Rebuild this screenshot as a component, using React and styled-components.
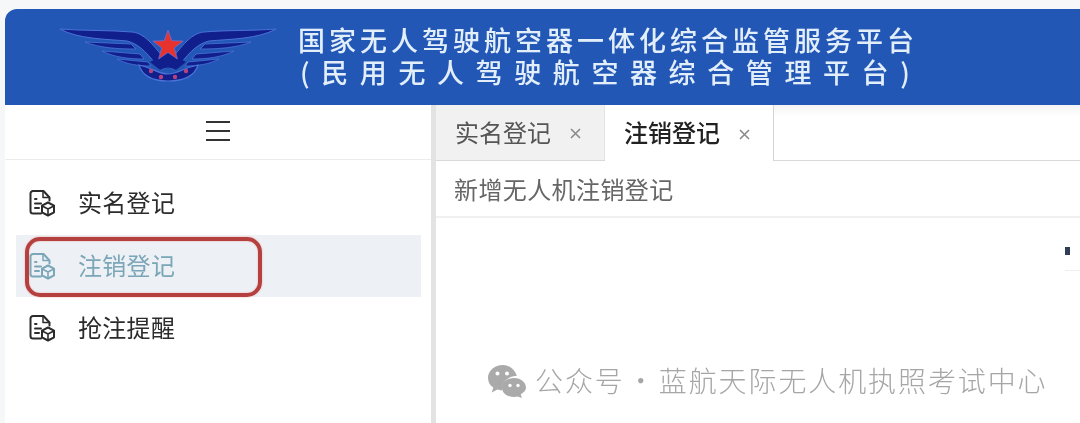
import React from 'react'
import styled, { createGlobalStyle } from 'styled-components'

const Global = createGlobalStyle`
    html, body {
        margin: 0;
        padding: 0;
        height: 100%;
        overflow: hidden;
        background: #ffffff;
    }
    #root {
        height: 100%;
    }
`

const Page = styled.div`
    position: relative;
    width: 1080px;
    height: 423px;
    padding: 9px 0 0 5px;
    box-sizing: border-box;
    display: flex;
    flex-direction: column;
    overflow: hidden;
    background: #f6f7f8;
    font-family: "Noto Sans CJK SC", "Noto Sans", sans-serif;
    filter: blur(0.45px);
`

const Header = styled.header`
    flex: 0 0 96px;
    display: flex;
    align-items: center;
    padding-left: 54px;
    gap: 21px;
    background: #2257b6;
    border-radius: 12px 0 0 0;
`

const Logo = styled.svg`
    width: 218px;
    height: 62px;
    margin-top: 4px;
    flex: none;
`

const Title = styled.div`
    display: flex;
    flex-direction: column;
    margin-top: -2px;
    color: #e2eefa;
`

const TitleLine = styled.div`
    font-size: 27px;
    line-height: 32.5px;
    font-weight: 500;
    white-space: nowrap;
    letter-spacing: ${({ $spacing }) => $spacing}px;
`

const Paren = styled.span`
    display: inline-block;
    margin-left: ${({ $open }) => ($open ? '2px' : '0')};
`

const Body = styled.div`
    flex: 1;
    display: flex;
    min-height: 0;
    background: #ffffff;
`

const Sidebar = styled.aside`
    flex: 0 0 431px;
    box-sizing: border-box;
    display: flex;
    flex-direction: column;
    border-right: 5px solid #e3e3e3;
`

const Toggle = styled.div`
    height: 55px;
    flex: none;
    display: flex;
    align-items: center;
    justify-content: center;
    border-bottom: 1px solid #ececec;
    box-sizing: border-box;
`

const Burger = styled.div`
    width: 24px;
    height: 20px;
    margin-top: -2px;
    display: flex;
    flex-direction: column;
    justify-content: space-between;
    & > span {
        display: block;
        height: 2px;
        background: #333333;
    }
`

const Menu = styled.nav`
    display: flex;
    flex-direction: column;
    padding: 12px 10px 0 11px;
`

const MenuItem = styled.div`
    position: relative;
    height: 62.5px;
    display: flex;
    align-items: center;
    gap: 22px;
    padding-left: 12px;
    font-size: 24px;
    letter-spacing: 0.3px;
    color: ${({ $active }) => ($active ? '#7ba6b8' : '#2b2b2b')};
    background: ${({ $active }) => ($active ? '#edf1f5' : 'transparent')};
`

const MenuLabel = styled.span`
    line-height: 32px;
    margin-top: -2px;
`

const Highlight = styled.div`
    position: absolute;
    left: 9px;
    top: 2px;
    width: 237px;
    height: 60px;
    box-sizing: border-box;
    border: 4px solid #b4413f;
    border-radius: 15px;
    box-shadow: 0 0 2px #f1a8a4, inset 0 0 2px #f1a8a4;
`

const Main = styled.main`
    flex: 1;
    min-width: 0;
    display: flex;
    flex-direction: column;
`

const TabBar = styled.div`
    height: 56px;
    flex: none;
    display: flex;
    box-sizing: border-box;
    border-bottom: 1px solid #d9d9d9;
    background: linear-gradient(#f4f4f4, #ffffff 12px);
`

const Tab = styled.div`
    width: 169px;
    box-sizing: border-box;
    height: ${({ $active }) => ($active ? '56px' : '55px')};
    display: flex;
    align-items: center;
    padding-left: 19px;
    gap: 19px;
    font-size: 24px;
    color: ${({ $active }) => ($active ? '#222222' : '#555555')};
    font-weight: ${({ $active }) => ($active ? 500 : 400)};
    background: ${({ $active }) => ($active ? '#ffffff' : '#f1f1f1')};
    border-right: 1px solid ${({ $active }) => ($active ? '#d4d4d4' : '#e4e4e4')};
`

const TabLabel = styled.span`
    line-height: 32px;
    margin-top: -2px;
`

const Close = styled.svg`
    width: 11px;
    height: 11px;
    margin-top: 2px;
    stroke: #8a8a8a;
    stroke-width: 1.6;
`

const SubHeader = styled.div`
    height: 57px;
    flex: none;
    box-sizing: border-box;
    display: flex;
    align-items: center;
    padding-left: 18px;
    font-size: 24px;
    letter-spacing: 0.4px;
    color: #666666;
    border-bottom: 2px solid #f0f0f0;
`

const Content = styled.div`
    flex: 1;
    display: flex;
    justify-content: flex-end;
    padding-top: 29px;
`

const Stub = styled.div`
    width: 15px;
    height: 24px;
    box-sizing: border-box;
    border-bottom: 1px solid #eeeeee;
    & > span {
        display: block;
        width: 5px;
        height: 8px;
        background: #2f3d55;
    }
`

const Watermark = styled.div`
    position: absolute;
    left: 487px;
    top: 360px;
    display: flex;
    align-items: center;
    gap: 8px;
    font-size: 28px;
    line-height: 40px;
    color: #a6a6a6;
    white-space: nowrap;
`

const WeChat = styled.svg`
    width: 40px;
    height: 34px;
    flex: none;
    margin-top: 2px;
`

const WatermarkText = styled.span`
    font-weight: 300;
    letter-spacing: 1.9px;
    word-spacing: -6px;
`

function DocCubeIcon() {
    return (
        <svg width="28" height="28" viewBox="0 0 28 28" fill="none" stroke="currentColor" strokeWidth="2" strokeLinejoin="round" strokeLinecap="round" style={{ flex: 'none' }}>
            <path d="M13 24.5H5a2.5 2.5 0 0 1-2.500-2.500V4.500A2.500 2.500 0 0 1 5 2h10.500l6 6.500v3" />
            <path d="M15 2.500v6h6" strokeWidth="1.500" />
            <path d="M7 10h1.500M7 14.500h6M7 19h4" />
            <path d="M20 13.500l6 3.200v6.600l-6 3.200-6-3.200v-6.600z" />
            <path d="M14.200 17l5.800 3 5.800-3M20 20v6" strokeWidth="1.600" />
        </svg>
    )
}

function WingShape({ flip }) {
    return (
        <g transform={flip ? 'matrix(-1 0 0 1 216 0)' : undefined}>
            <path d="M0 1C25 3 50 2 72 4C86 5 97 22 110 38L100 42C90 28 80 16 67 13C45 11 18 11 0 1Z" fill="#111f8c" stroke="#4a72d8" strokeWidth="1" />
            <path d="M25 14L71 16L76 21C58 21 40 20 25 14Z" fill="#111f8c" stroke="#4a72d8" strokeWidth="0.8" />
            <path d="M42 23L80 26L84 31C68 31 54 29 42 23Z" fill="#111f8c" stroke="#4a72d8" strokeWidth="0.8" />
            <path d="M57 31L88 34L91 38C78 38 66 36 57 31Z" fill="#111f8c" stroke="#4a72d8" strokeWidth="0.8" />
        </g>
    )
}

function Emblem() {
    return (
        <Logo viewBox="0 0 216 62">
            <WingShape />
            <WingShape flip />
            <g transform="translate(1 0)">
                <path d="M89 34L107 24L125 34L115 42Q107 37 99 42Z" fill="#111f8c" />
                <path d="M107 2L110.800 12.700L122.200 13.100L113.200 20L116.400 30.900L107 24.500L97.600 30.900L100.800 20L91.800 13.100L103.200 12.700Z" fill="#e8322e" stroke="#6b6fd8" strokeWidth="0.8" />
                <path d="M78 37C92 40 97 46 107 46C117 46 122 40 137 37C134 47 124 53 107 53C90 53 81 47 78 37Z" fill="#111f8c" stroke="#4a72d8" strokeWidth="1.200" />
                <circle cx="90" cy="43" r="2.200" fill="#b8437e" />
                <circle cx="100" cy="49" r="2.200" fill="#b8437e" />
                <circle cx="114" cy="49" r="2.200" fill="#b8437e" />
                <circle cx="125" cy="43" r="2.200" fill="#b8437e" />
            </g>
        </Logo>
    )
}

const menuItems = [
    { label: '实名登记' },
    { label: '注销登记', active: true },
    { label: '抢注提醒' },
]

const tabs = [
    { label: '实名登记' },
    { label: '注销登记', active: true },
]

function App() {
    return (
        <Page>
            <Global />
            <Header>
                <Emblem />
                <Title>
                    <TitleLine $spacing={4}>国家无人驾驶航空器一体化综合监管服务平台</TitleLine>
                    <TitleLine $spacing={11.6}>
                        <Paren $open>(</Paren>民用无人驾驶航空器综合管理平台<Paren>)</Paren>
                    </TitleLine>
                </Title>
            </Header>
            <Body>
                <Sidebar>
                    <Toggle>
                        <Burger>
                            <span />
                            <span />
                            <span />
                        </Burger>
                    </Toggle>
                    <Menu>
                        {menuItems.map((item) => (
                            <MenuItem key={item.label} $active={item.active}>
                                <DocCubeIcon />
                                <MenuLabel>{item.label}</MenuLabel>
                                {item.active && <Highlight />}
                            </MenuItem>
                        ))}
                    </Menu>
                </Sidebar>
                <Main>
                    <TabBar>
                        {tabs.map((tab) => (
                            <Tab key={tab.label} $active={tab.active}>
                                <TabLabel>{tab.label}</TabLabel>
                                <Close viewBox="0 0 11 11">
                                    <path d="M1 1L10 10M10 1L1 10" />
                                </Close>
                            </Tab>
                        ))}
                    </TabBar>
                    <SubHeader>新增无人机注销登记</SubHeader>
                    <Content>
                        <Stub>
                            <span />
                        </Stub>
                    </Content>
                </Main>
            </Body>
            <Watermark>
                <WeChat viewBox="0 0 40 34">
                    <path d="M16 1C7.500 1 1 6.800 1 14C1 18 3 21.300 6.300 23.600L4.800 28.500L10.400 25.500C12 26 13.500 26.300 15 26.400C14.300 19 20 12.500 29.800 11.800C27.800 5.600 22.500 1 16 1Z" fill="#aaaaaa" />
                    <path d="M27 14C19.800 14 15 18.600 15 23.800C15 29 19.800 33 27 33C28.300 33 29.500 32.800 30.600 32.500L34.800 34L33.800 30.300C37 28.300 39 26.200 39 23.800C39 18.600 34.200 14 27 14Z" fill="#aaaaaa" />
                    <circle cx="10.500" cy="9.500" r="2" fill="#ffffff" />
                    <circle cx="20" cy="9.500" r="2" fill="#ffffff" />
                    <circle cx="23" cy="21.500" r="1.700" fill="#ffffff" />
                    <circle cx="31" cy="21.500" r="1.700" fill="#ffffff" />
                </WeChat>
                <WatermarkText>公众号 · 蓝航天际无人机执照考试中心</WatermarkText>
            </Watermark>
        </Page>
    )
}

export default App
